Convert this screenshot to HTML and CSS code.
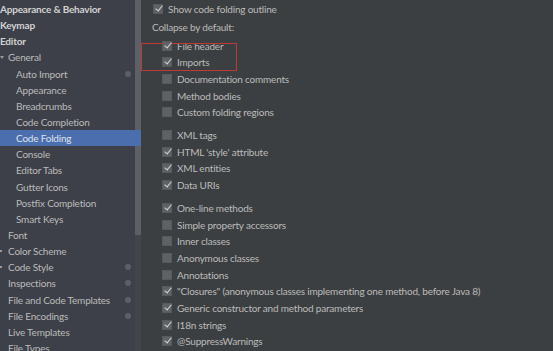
FILE: index.html
```html
<!DOCTYPE html>
<html lang="en">
<head>
    <meta charset="UTF-8">
    <title>Settings - Code Folding</title>
    <link rel="stylesheet" href="styles.css">
</head>
<body>
    <div class="window">
        <div class="sidebar">
            <div class="tree">
                <div class="node top">Appearance &amp; Behavior</div>
                <div class="node top">Keymap</div>
                <div class="node top">Editor</div>
                <div class="node lvl1"><span class="arrow"></span>General</div>
                <div class="node lvl2">Auto Import<span class="dot"></span></div>
                <div class="node lvl2">Appearance</div>
                <div class="node lvl2">Breadcrumbs</div>
                <div class="node lvl2">Code Completion</div>
                <div class="node lvl2 selected">Code Folding</div>
                <div class="node lvl2">Console</div>
                <div class="node lvl2">Editor Tabs</div>
                <div class="node lvl2">Gutter Icons</div>
                <div class="node lvl2">Postfix Completion</div>
                <div class="node lvl2">Smart Keys</div>
                <div class="node lvl1">Font</div>
                <div class="node lvl1"><span class="arrow closed"></span>Color Scheme</div>
                <div class="node lvl1"><span class="arrow closed"></span>Code Style<span class="dot"></span></div>
                <div class="node lvl1">Inspections<span class="dot"></span></div>
                <div class="node lvl1">File and Code Templates<span class="dot"></span></div>
                <div class="node lvl1">File Encodings<span class="dot"></span></div>
                <div class="node lvl1">Live Templates</div>
                <div class="node lvl1">File Types</div>
            </div>
            <div class="scrollbar"><div class="thumb"></div></div>
        </div>
        <div class="content">
            <label class="opt first"><span class="box on"></span>Show code folding outline</label>
            <div class="caption">Collapse by default:</div>

            <div class="group">
                <div class="highlight"></div>
                <label class="opt"><span class="box on"></span>File header</label>
                <label class="opt"><span class="box on"></span>Imports</label>
                <label class="opt"><span class="box"></span>Documentation comments</label>
                <label class="opt"><span class="box"></span>Method bodies</label>
                <label class="opt"><span class="box"></span>Custom folding regions</label>
            </div>

            <div class="group">
                <label class="opt"><span class="box"></span>XML tags</label>
                <label class="opt"><span class="box on"></span>HTML 'style' attribute</label>
                <label class="opt"><span class="box on"></span>XML entities</label>
                <label class="opt"><span class="box on"></span>Data URIs</label>
            </div>

            <div class="group">
                <label class="opt"><span class="box on"></span>One-line methods</label>
                <label class="opt"><span class="box"></span>Simple property accessors</label>
                <label class="opt"><span class="box"></span>Inner classes</label>
                <label class="opt"><span class="box"></span>Anonymous classes</label>
                <label class="opt"><span class="box"></span>Annotations</label>
                <label class="opt"><span class="box on"></span>"Closures" (anonymous classes implementing one method, before Java 8)</label>
                <label class="opt"><span class="box on"></span>Generic constructor and method parameters</label>
                <label class="opt"><span class="box on"></span>I18n strings</label>
                <label class="opt"><span class="box on"></span>@SuppressWarnings</label>
            </div>
        </div>
    </div>
</body>
</html>
```

FILE: styles.css
```css
body {
    margin: 0;
    background-color: #3c3f41;
    color: #bbbbbb;
    font-family: Lato, "Open Sans", sans-serif;
    font-size: 10px;
    letter-spacing: -0.2px;
    overflow: hidden;
}
.window {
    display: flex;
    height: 351px;
}
.sidebar {
    display: flex;
    width: 141px;
    min-width: 141px;
    background-color: #3d4048;
}
.tree {
    flex: 1;
    min-width: 0;
    padding-top: 1px;
}
.node {
    position: relative;
    height: 16.15px;
    line-height: 16px;
    white-space: nowrap;
}
.node.top {
    font-weight: bold;
    color: #d2d2d2;
}
.node.lvl1 {
    padding-left: 8px;
}
.node.lvl2 {
    padding-left: 16px;
}
.node.selected {
    margin-right: -6px;
    background-color: #4b6eaf;
    color: #dfe3ea;
}
.arrow {
    position: absolute;
    left: 0;
    top: 7px;
    width: 0;
    height: 0;
    border-left: 2px solid transparent;
    border-right: 2px solid transparent;
    border-top: 3px solid #9a9a9a;
}
.arrow.closed {
    border: none;
    width: 2px;
    height: 2px;
    top: 7px;
    background-color: #9a9a9a;
}
.dot {
    position: absolute;
    left: 125px;
    top: 5px;
    width: 6px;
    height: 6px;
    border-radius: 50%;
    background-color: #5c5f66;
}
.scrollbar {
    width: 6px;
    flex-shrink: 0;
    background-color: #42454d;
}
.thumb {
    width: 6px;
    height: 235px;
    background-color: #5d6067;
}
.content {
    flex: 1;
    min-width: 0;
    padding: 0.65px 0 0 11px;
}
.opt {
    display: flex;
    align-items: center;
    height: 16.7px;
    padding-left: 10px;
    white-space: nowrap;
}
.opt.first {
    padding-left: 1px;
}
.caption {
    height: 20px;
    line-height: 21px;
}
.group {
    position: relative;
    margin-bottom: 6px;
}
.highlight {
    position: absolute;
    left: -11px;
    top: 6px;
    width: 96px;
    height: 28px;
    border: 1px solid #bf3a36;
    box-sizing: border-box;
}
.box {
    position: relative;
    width: 8px;
    height: 8px;
    margin-right: 5px;
    background-color: #5f6264;
    border: 1px solid #57595b;
    flex-shrink: 0;
}
.box.on::after {
    content: "";
    position: absolute;
    left: 3px;
    top: -1px;
    width: 3px;
    height: 6px;
    border-right: 1.5px solid #d6d6d6;
    border-bottom: 1.5px solid #d6d6d6;
    transform: rotate(40deg);
}
```
